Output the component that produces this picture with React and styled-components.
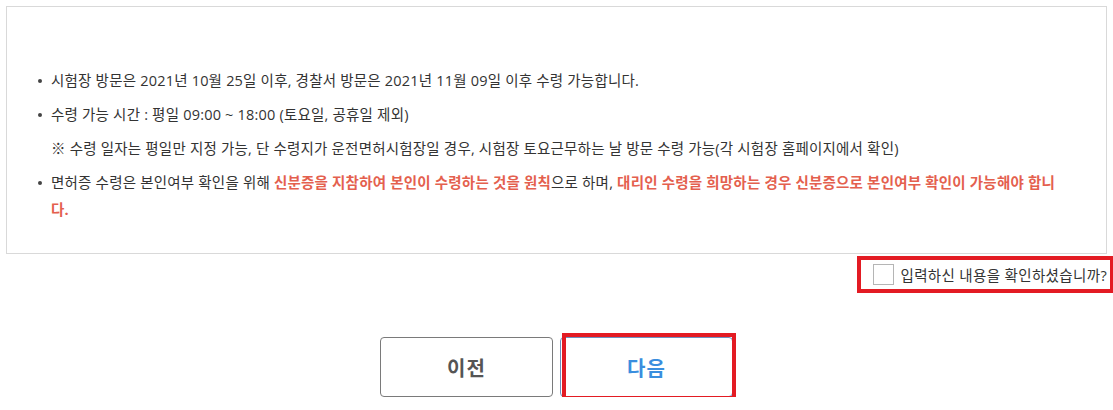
import React from "react";
import styled, { createGlobalStyle } from "styled-components";

const GlobalStyle = createGlobalStyle`
  body {
    margin: 0;
    background: #fff;
    font-family: "Open Sans", "Noto Sans CJK KR", sans-serif;
    color: #333;
  }
`;

const Page = styled.div`
  padding: 6px 0 0 6px;
  width: 1107px;
`;

const NoticeBox = styled.div`
  width: 1101px;
  box-sizing: border-box;
  border: 1px solid #d9d9d9;
  padding: 60px 48px 30px 30px;
`;

const List = styled.ul`
  list-style: none;
  margin: 0;
  padding: 0;
`;

const Item = styled.li`
  position: relative;
  padding-left: 14px;
  font-size: 14.5px;
  line-height: 27px;
  letter-spacing: 0.2px;
  color: #333;
  margin-bottom: 7px;

  &:last-child {
    margin-bottom: 0;
  }

  &::before {
    content: ${(p) => (p.$sub ? "none" : '""')};
    position: absolute;
    left: 1px;
    top: 12px;
    width: 4px;
    height: 4px;
    border-radius: 50%;
    background: #444;
  }
`;

const Em = styled.span`
  color: #e4604e;
  font-weight: 700;
`;

const ConfirmRow = styled.div`
  display: flex;
  justify-content: flex-end;
  margin-top: 2px;
`;

const ConfirmLabel = styled.label`
  display: flex;
  align-items: center;
  gap: 6px;
  height: 29px;
  padding: 0 3px 0 12px;
  border: 4px solid #e31b23;
  font-size: 14.5px;
  letter-spacing: 0.35px;
  color: #333;
  margin-right: -1px;
  white-space: nowrap;
`;

const Box = styled.span`
  width: 19px;
  height: 19px;
  border: 1px solid #b5b5b5;
  background: #fff;
  flex: none;
`;

const Buttons = styled.div`
  display: flex;
  justify-content: center;
  gap: 7px;
  margin-top: 44px;
  padding-right: 6px;
`;

const ButtonWrap = styled.div`
  position: relative;
`;

const Highlight = styled.span`
  position: absolute;
  top: -4px;
  left: 2px;
  right: -3px;
  bottom: -3px;
  border: 4px solid #e31b23;
  pointer-events: none;
`;

const Button = styled.button`
  display: block;
  width: 173px;
  height: 60px;
  border-radius: 4px;
  background: #fff;
  font-family: inherit;
  font-size: 20px;
  font-weight: 700;
  letter-spacing: 1px;
  cursor: pointer;
  border: 1px solid ${(p) => (p.$primary ? "#6f8fbf" : "#7a7a7a")};
  color: ${(p) => (p.$primary ? "#3a8ede" : "#555")};
`;

export default function App() {
  return (
    <>
      <GlobalStyle />
      <Page>
        <NoticeBox>
          <List>
            <Item>
              시험장 방문은 2021년 10월 25일 이후, 경찰서 방문은 2021년 11월 09일 이후 수령 가능합니다.
            </Item>
            <Item>수령 가능 시간 : 평일 09:00 ~ 18:00 (토요일, 공휴일 제외)</Item>
            <Item $sub>
              ※ 수령 일자는 평일만 지정 가능, 단 수령지가 운전면허시험장일 경우, 시험장 토요근무하는 날 방문 수령 가능(각 시험장 홈페이지에서 확인)
            </Item>
            <Item>
              면허증 수령은 본인여부 확인을 위해 <Em>신분증을 지참하여 본인이 수령하는 것을 원칙</Em>으로 하며,{" "}
              <Em>대리인 수령을 희망하는 경우 신분증으로 본인여부 확인이 가능해야 합니다.</Em>
            </Item>
          </List>
        </NoticeBox>
        <ConfirmRow>
          <ConfirmLabel>
            <Box />
            입력하신 내용을 확인하셨습니까?
          </ConfirmLabel>
        </ConfirmRow>
        <Buttons>
          <ButtonWrap>
            <Button>이전</Button>
          </ButtonWrap>
          <ButtonWrap>
            <Button $primary>다음</Button>
            <Highlight />
          </ButtonWrap>
        </Buttons>
      </Page>
    </>
  );
}
